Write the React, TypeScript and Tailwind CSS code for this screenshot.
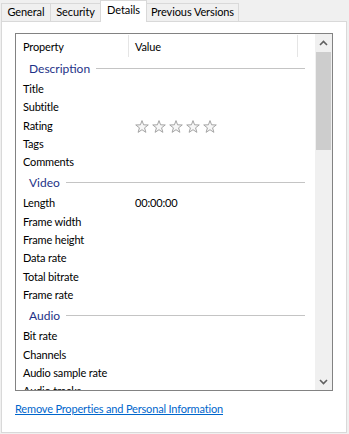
import React from "react";

const Star = () => (
  <svg width="14" height="13" viewBox="0 0 14 13">
    <polygon
      points="7,0.6 8.59,4.82 13.28,4.96 9.57,7.83 10.88,12.34 7,9.7 3.12,12.34 4.43,7.83 0.72,4.96 5.41,4.82"
      fill="#f7f7f7"
      stroke="#a3a3a3"
      strokeWidth="1"
      strokeLinejoin="round"
    />
  </svg>
);

const Group = ({ title }: { title: string }) => (
  <div className="h-[23px] flex items-center pl-[13px] pr-[10px] shrink-0 pt-[1px]">
    <span className="text-[12px] leading-[22px] text-[#1e3287]">{title}</span>
    <div className="flex-1 h-px bg-[#c4c4c4] ml-[6px] mt-[-2px]" />
  </div>
);

const Row = ({ label, value }: { label: string; value?: React.ReactNode }) => (
  <div className="h-[18.3px] flex items-center shrink-0 leading-[18.3px] tracking-[-0.17px]">
    <div className="w-[113px] pl-[7px] whitespace-nowrap">{label}</div>
    <div className="pl-[6px] flex items-center">{value}</div>
  </div>
);

const Chevron = ({ down }: { down?: boolean }) => (
  <svg width="9" height="6" viewBox="0 0 9 6">
    <polyline
      points={down ? "1,1 4.5,4.5 8,1" : "1,5 4.5,1.5 8,5"}
      fill="none"
      stroke="#606060"
      strokeWidth="1.6"
    />
  </svg>
);

export default function App() {
  return (
    <div className="w-[349px] h-[434px] bg-[#f0f0f0] font-['Lato',sans-serif] text-[11px] text-black overflow-hidden">
      <div className="flex items-end h-[21px] pl-[1px] tracking-[-0.1px]">
        <div className="w-[50px] h-[18px] border-t border-l border-r border-[#d9d9d9] bg-[#f0f0f0] flex justify-center leading-[16px]">
          General
        </div>
        <div className="w-[51px] h-[18px] -ml-px border-t border-l border-r border-[#d9d9d9] bg-[#f0f0f0] flex justify-center leading-[16px]">
          Security
        </div>
        <div className="w-[47px] h-[22px] -ml-px mb-[-1px] relative z-10 border-t border-l border-r border-[#d9d9d9] bg-white flex justify-center leading-[16px] pt-[1px]">
          Details
        </div>
        <div className="w-[93px] h-[18px] -ml-px border-t border-l border-r border-[#d9d9d9] bg-[#f0f0f0] flex justify-center leading-[16px]">
          Previous Versions
        </div>
      </div>
      <div className="ml-[1px] w-[346px] h-[412px] bg-white border border-[#d9d9d9] pt-[11px] pl-[13px]">
        <div className="w-[318px] h-[358px] border border-[#828282] flex">
          <div className="w-[299px] flex flex-col">
            <div className="h-[23px] flex shrink-0 leading-[23px] pt-[1px] tracking-[-0.17px]">
              <div className="w-[113px] pl-[7px] border-r border-[#e5e5e5]">Property</div>
              <div className="w-[169px] pl-[6px] border-r border-[#e5e5e5]">Value</div>
            </div>
            <div className="flex-1 overflow-hidden flex flex-col">
              <Group title="Description" />
              <Row label="Title" />
              <Row label="Subtitle" />
              <Row
                label="Rating"
                value={
                  <div className="flex gap-[3px] mt-[1px]">
                    <Star />
                    <Star />
                    <Star />
                    <Star />
                    <Star />
                  </div>
                }
              />
              <Row label="Tags" />
              <Row label="Comments" />
              <Group title="Video" />
              <Row label="Length" value="00:00:00" />
              <Row label="Frame width" />
              <Row label="Frame height" />
              <Row label="Data rate" />
              <Row label="Total bitrate" />
              <Row label="Frame rate" />
              <Group title="Audio" />
              <Row label="Bit rate" />
              <Row label="Channels" />
              <Row label="Audio sample rate" />
              <Row label="Audio tracks" />
            </div>
          </div>
          <div className="w-[17px] bg-[#f0f0f0] flex flex-col">
            <div className="h-[17px] flex items-center justify-center shrink-0">
              <Chevron />
            </div>
            <div className="h-[98px] mt-[1px] mx-[1px] bg-[#cdcdcd] shrink-0" />
            <div className="flex-1" />
            <div className="h-[17px] flex items-center justify-center shrink-0">
              <Chevron down />
            </div>
          </div>
        </div>
        <div className="mt-[10px] leading-[16px] tracking-[-0.17px]">
          <span className="text-[#0066cc] underline">Remove Properties and Personal Information</span>
        </div>
      </div>
    </div>
  );
}
